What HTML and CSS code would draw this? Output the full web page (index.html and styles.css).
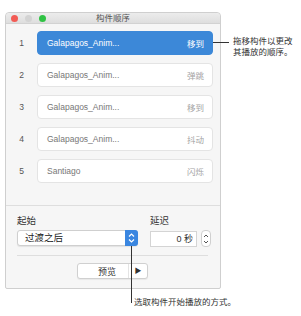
FILE: index.html
```html
<!DOCTYPE html>
<html>
<head>
    <meta charset="utf-8" />
    <title>构件顺序</title>
    <link rel="stylesheet" href="styles.css">
</head>
<body>
    <div class="stage">
        <div class="window">
            <div class="titlebar">
                <div class="lights">
                    <span class="light red"></span>
                    <span class="light grey"></span>
                    <span class="light green"></span>
                </div>
                <div class="title">构件顺序</div>
            </div>

            <div class="build-list">
                <div class="build-row">
                    <span class="build-num">1</span>
                    <div class="build-item selected">
                        <span class="build-name">Galapagos_Anim...</span>
                        <span class="build-effect">移到</span>
                    </div>
                </div>
                <div class="build-row">
                    <span class="build-num">2</span>
                    <div class="build-item">
                        <span class="build-name">Galapagos_Anim...</span>
                        <span class="build-effect">弹跳</span>
                    </div>
                </div>
                <div class="build-row">
                    <span class="build-num">3</span>
                    <div class="build-item">
                        <span class="build-name">Galapagos_Anim...</span>
                        <span class="build-effect">移到</span>
                    </div>
                </div>
                <div class="build-row">
                    <span class="build-num">4</span>
                    <div class="build-item">
                        <span class="build-name">Galapagos_Anim...</span>
                        <span class="build-effect">抖动</span>
                    </div>
                </div>
                <div class="build-row">
                    <span class="build-num">5</span>
                    <div class="build-item">
                        <span class="build-name">Santiago</span>
                        <span class="build-effect">闪烁</span>
                    </div>
                </div>
            </div>

            <div class="options">
                <div class="option-grid">
                    <div class="option-col">
                        <div class="option-label">起始</div>
                        <div class="popup">
                            <span class="popup-text">过渡之后</span>
                            <span class="popup-arrows">
                                <svg width="7" height="10" viewBox="0 0 7 10">
                                    <path d="M1 3.5 L3.5 1 L6 3.5 M1 6.5 L3.5 9 L6 6.5" fill="none" stroke="#fff" stroke-width="1.2"/>
                                </svg>
                            </span>
                        </div>
                    </div>
                    <div class="option-col">
                        <div class="option-label">延迟</div>
                        <div class="delay-row">
                            <div class="delay-field">0 秒</div>
                            <div class="stepper">
                                <svg width="6" height="12" viewBox="0 0 6 12">
                                    <path d="M1 4 L3 2 L5 4 M1 8 L3 10 L5 8" fill="none" stroke="#555" stroke-width="1"/>
                                </svg>
                            </div>
                        </div>
                    </div>
                </div>
                <div class="separator"></div>
                <div class="preview-wrap">
                    <div class="preview-btn">
                        <span class="preview-text">预览</span>
                        <span class="preview-play">&#9654;</span>
                    </div>
                </div>
            </div>
        </div>

        <div class="callout callout-top">
            <span class="callout-line-h"></span>
            <span class="callout-text">拖移构件以更改<br>其播放的顺序。</span>
        </div>
        <div class="callout callout-bottom">
            <span class="callout-line-v"></span>
            <span class="callout-text">选取构件开始播放的方式。</span>
        </div>
    </div>
</body>
</html>
```

FILE: styles.css
```css
body {
    margin: 0;
    background: #fff;
    font-family: "Liberation Sans", "Noto Sans CJK SC", sans-serif;
}

.stage {
    position: relative;
    width: 301px;
    height: 316px;
    overflow: hidden;
}

.window {
    position: relative;
    margin: 12px 0 0 5px;
    width: 214px;
    height: 275px;
    border: 1px solid #cfcfcf;
    border-radius: 4px 4px 2px 2px;
    background: #f6f6f6;
    display: flex;
    flex-direction: column;
}

.titlebar {
    height: 10px;
    border-bottom: 1px solid #d2d2d2;
    background: linear-gradient(#ececec, #dedede);
    border-radius: 4px 4px 0 0;
    display: flex;
    align-items: center;
    position: relative;
}

.lights {
    display: flex;
    gap: 7px;
    margin-left: 5px;
}

.light {
    width: 7px;
    height: 7px;
    border-radius: 50%;
}
.red { background: #f25b55; }
.grey { background: #d3d3d3; }
.green { background: #2fc244; }

.title {
    position: absolute;
    left: 0;
    right: 0;
    text-align: center;
    font-size: 8.5px;
    line-height: 10px;
    color: #555;
}

.build-list {
    display: flex;
    flex-direction: column;
    gap: 8px;
    padding: 7px 7px 0 0;
}

.build-row {
    display: grid;
    grid-template-columns: 31px 1fr;
    align-items: center;
}

.build-num {
    text-align: center;
    font-size: 8.5px;
    color: #555;
}

.build-item {
    height: 22px;
    border: 1px solid #e4e4e4;
    border-radius: 4px;
    background: #fff;
    display: flex;
    align-items: center;
    justify-content: space-between;
    padding: 0 8px 0 9px;
    font-size: 8.5px;
}

.build-name {
    color: #777;
}

.build-effect {
    color: #a5a5a5;
}

.build-item.selected {
    background: #3c88d8;
    border-color: #3c88d8;
}
.build-item.selected .build-name,
.build-item.selected .build-effect {
    color: #fff;
}

.options {
    margin-top: 22px;
    border-top: 1px solid #dedede;
    padding: 9px 12px 0 11px;
}

.option-grid {
    display: grid;
    grid-template-columns: 121px 1fr;
    column-gap: 12px;
}

.option-label {
    font-size: 9.5px;
    line-height: 11px;
    color: #333;
    margin-bottom: 4px;
}

.popup {
    height: 14px;
    border: 1px solid #cfcfcf;
    border-radius: 3px;
    background: #fff;
    display: flex;
    align-items: stretch;
    box-shadow: 0 1px 1px rgba(0, 0, 0, 0.08);
}

.popup-text {
    flex: 1;
    font-size: 9.5px;
    line-height: 14px;
    color: #222;
    padding-left: 7px;
}

.popup-arrows {
    width: 13px;
    margin: -1px -1px -1px 0;
    background: #3a86e0;
    border-radius: 0 3px 3px 0;
    display: flex;
    align-items: center;
    justify-content: center;
}

.delay-row {
    display: flex;
    gap: 4px;
    align-items: center;
}

.delay-field {
    width: 42px;
    height: 14px;
    border: 1px solid #d4d4d4;
    background: #fff;
    font-size: 9px;
    line-height: 14px;
    text-align: right;
    padding-right: 3px;
    color: #333;
}

.stepper {
    width: 8px;
    height: 15px;
    border: 1px solid #d0d0d0;
    border-radius: 4px;
    background: #fff;
    display: flex;
    align-items: center;
    justify-content: center;
}

.separator {
    height: 1px;
    background: #dedede;
    margin: 8px 0 0 0;
}

.preview-wrap {
    display: flex;
    justify-content: center;
    margin-top: 7px;
}

.preview-btn {
    width: 69px;
    height: 14px;
    border: 1px solid #d0d0d0;
    border-radius: 3px;
    background: #fff;
    display: flex;
    align-items: center;
    box-shadow: 0 1px 1px rgba(0, 0, 0, 0.06);
}

.preview-text {
    flex: 1;
    text-align: center;
    font-size: 9px;
    color: #333;
    padding-left: 8px;
}

.preview-play {
    width: 18px;
    text-align: center;
    font-size: 7px;
    color: #333;
    border-left: 1px solid #e4e4e4;
    line-height: 14px;
}

/* annotations over the page */
.callout {
    position: absolute;
    display: flex;
    color: #333;
    font-size: 8.5px;
}

.callout-top {
    left: 213px;
    top: 36px;
    align-items: flex-start;
}

.callout-line-h {
    width: 16px;
    height: 1px;
    background: #333;
    margin: 6px 4px 0 0;
}

.callout-top .callout-text {
    line-height: 11px;
}

.callout-bottom {
    left: 131px;
    top: 246px;
    align-items: flex-end;
}

.callout-line-v {
    width: 1px;
    height: 57px;
    background: #333;
    margin-right: 2px;
}

.callout-bottom .callout-text {
    line-height: 11px;
    margin-bottom: -5px;
}
```
